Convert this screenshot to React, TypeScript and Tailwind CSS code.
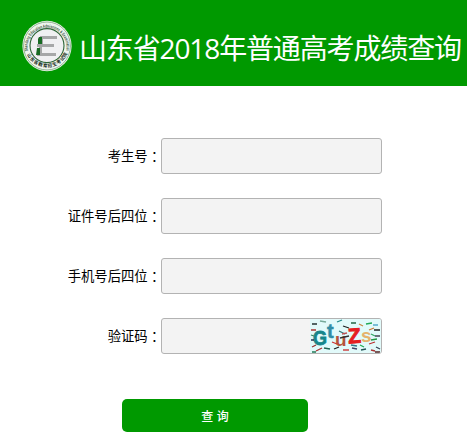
interface Field {
  id: string;
  label: string;
  captcha?: boolean;
}

const fields: Field[] = [
  { id: 'ksh', label: '考生号' },
  { id: 'zjh', label: '证件号后四位' },
  { id: 'sjh', label: '手机号后四位' },
  { id: 'yzm', label: '验证码', captcha: true },
];

// x, y, width, slope, color
const dashes: [number, number, number, number, string][] = [
  [2, 5, 5, 0, '#233'], [10, 2, 6, 1, '#7a9'], [27, 3, 5, -2, '#288'],
  [33, 7, 6, 2, '#222'], [41, 4, 5, 0, '#264'], [49, 5, 4, 2, '#c84'], [56, 5, 6, -1, '#2a5'],
  [63, 6, 5, 0, '#5ac'], [1, 11, 5, 0, '#a33'], [29, 12, 6, 3, '#377'], [59, 11, 5, -2, '#c73'],
  [64, 11, 6, 0, '#222'], [1, 16, 3, 1, '#386'], [32, 15, 5, -1, '#b55'], [61, 15, 4, 2, '#3a6'],
  [65, 17, 5, 0, '#445'], [30, 19, 9, -2, '#333'], [61, 21, 6, -1, '#294'],
  [1, 21, 3, 0, '#235'], [22, 23, 5, 2, '#c33'], [41, 26, 6, 1, '#378'], [50, 26, 4, 2, '#2a5'],
  [59, 25, 6, -2, '#b33'], [2, 28, 4, -2, '#933'], [6, 32, 6, -3, '#a33'], [14, 29, 6, 1, '#265'],
  [24, 30, 5, -2, '#222'], [33, 31, 6, 0, '#c44'], [42, 29, 5, 1, '#446'], [51, 31, 5, -1, '#255'],
  [61, 31, 4, 1, '#a33'], [66, 28, 4, 2, '#345'], [2, 33, 4, 0, '#275'], [65, 33, 5, 0, '#522'],
];

const Captcha = () => (
  <svg className="block w-[71px] h-[34px] shrink-0" viewBox="0 0 71 34">
    <rect width="71" height="34" fill="#e2fafa" />
    <g fontFamily="Liberation Sans, sans-serif" fontWeight="bold">
      <text x="3" y="26" fontSize="20" fill="#16868b" stroke="#16868b" strokeWidth="0.8" textLength="14" lengthAdjust="spacingAndGlyphs">G</text>
      <text x="17" y="19" fontSize="20" fill="#318da5" stroke="#318da5" strokeWidth="0.5">t</text>
      <text x="25" y="27" fontSize="19" fill="#b5543c">u</text>
      <text x="38" y="24" fontSize="21" fill="#e51e22" stroke="#e51e22" strokeWidth="0.9" transform="rotate(-4 44 18)">Z</text>
      <text x="51" y="23" fontSize="19" fill="#e5b36c">s</text>
    </g>
    {dashes.map(([x, y, w, slope, color], i) => (
      <line key={i} x1={x} y1={y} x2={x + w} y2={y + slope} stroke={color} strokeWidth="1.3" />
    ))}
  </svg>
);

const Logo = () => (
  <svg className="w-[50px] h-[52px] shrink-0" viewBox="0 0 50 52">
    <defs>
      <path id="ringTop" d="M 6 31 A 19.4 19.4 0 1 1 44 31" />
      <path id="ringBottom" d="M 4.8 34 A 22 22 0 0 0 45.2 34" />
    </defs>
    <ellipse cx="25" cy="26" rx="24.6" ry="25.2" fill="#eef4ed" />
    <ellipse cx="25" cy="26" rx="23.4" ry="24" fill="none" stroke="#6b996e" strokeWidth="0.7" />
    <circle cx="25" cy="25.6" r="17" fill="#f0f0f2" stroke="#2d6436" strokeWidth="1.1" />
    <text fontFamily="Liberation Sans, sans-serif" fontSize="4.6" fontWeight="bold" fill="#34543a">
      <textPath href="#ringTop" textLength="68" lengthAdjust="spacingAndGlyphs">Shandong Education Admissions &amp; Examination</textPath>
    </text>
    <text fontFamily="Noto Sans CJK SC, sans-serif" fontSize="4.6" fontWeight="bold" fill="#172d1b">
      <textPath href="#ringBottom" startOffset="0.5" textLength="51">山东省教育招生考试院</textPath>
    </text>
    <path d="M18 16H35V19H21V24H32V27H20V33H34V36H15V33H17V27H15V24H18Z" fill="#a6a7a8" />
    <path d="M17 17H20V24H16V19ZM15 28H18V35H14Z" fill="#176b22" />
  </svg>
);

const App = () => {
  return (
    <div className="w-full h-[446px] overflow-hidden bg-white text-black font-['Noto_Sans_CJK_SC',sans-serif]">
      <header className="flex h-[86px] bg-[#009900] pl-[22px] pt-5">
        <Logo />
        <h1 className="ml-[7px] mt-2 whitespace-nowrap text-[28px] leading-[40px] font-normal tracking-[-1.13px] text-white font-['Open_Sans','Noto_Sans_CJK_SC',sans-serif]">
          山东省2018年普通高考成绩查询
        </h1>
      </header>

      <form className="pt-[52px]">
        <div className="flex flex-col gap-6">
          {fields.map((field) => (
            <div key={field.id} className="flex h-9 items-center">
              <label htmlFor={field.id} className="flex w-[161px] justify-end text-[13.33px] leading-5">
                {field.label}
                <span className="pt-px font-['Noto_Sans_CJK_JP',sans-serif]">：</span>
              </label>
              <div className="flex h-9 w-[221px] items-center overflow-hidden rounded-[3px] border border-[#b3b3b3] bg-[#f3f3f3]">
                <input id={field.id} className="h-full min-w-0 flex-1 bg-transparent px-2 text-sm outline-none" />
                {field.captcha && <Captcha />}
              </div>
            </div>
          ))}
        </div>
        <button
          type="button"
          className="mt-[45px] ml-[122px] block h-[33px] w-[186px] rounded-[5px] bg-[#009900] text-[12px] leading-[33px] font-medium text-white [word-spacing:1px]"
        >
          查 询
        </button>
      </form>
    </div>
  );
};

export default App;
